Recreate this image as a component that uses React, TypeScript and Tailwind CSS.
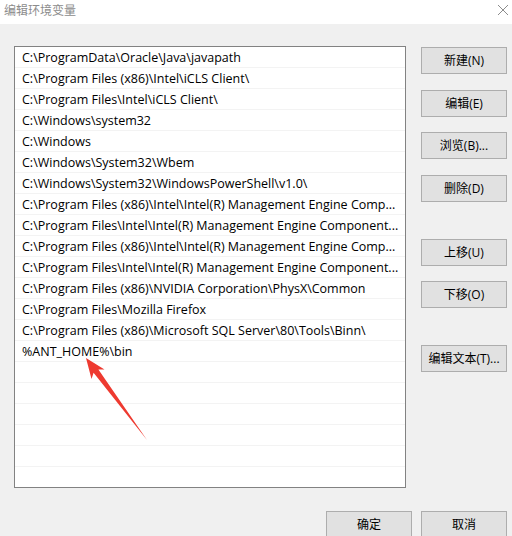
import React from 'react'

const paths = [
  'C:\\ProgramData\\Oracle\\Java\\javapath',
  'C:\\Program Files (x86)\\Intel\\iCLS Client\\',
  'C:\\Program Files\\Intel\\iCLS Client\\',
  'C:\\Windows\\system32',
  'C:\\Windows',
  'C:\\Windows\\System32\\Wbem',
  'C:\\Windows\\System32\\WindowsPowerShell\\v1.0\\',
  'C:\\Program Files (x86)\\Intel\\Intel(R) Management Engine Comp...',
  'C:\\Program Files\\Intel\\Intel(R) Management Engine Component...',
  'C:\\Program Files (x86)\\Intel\\Intel(R) Management Engine Comp...',
  'C:\\Program Files\\Intel\\Intel(R) Management Engine Component...',
  'C:\\Program Files (x86)\\NVIDIA Corporation\\PhysX\\Common',
  'C:\\Program Files\\Mozilla Firefox',
  'C:\\Program Files (x86)\\Microsoft SQL Server\\80\\Tools\\Binn\\',
  '%ANT_HOME%\\bin',
  '',
  '',
  '',
  '',
  '',
  '',
]

const FONT = "font-['Open_Sans','Noto_Sans_CJK_SC',sans-serif]"

function WinButton({ label, className = '' }: { label: string; className?: string }) {
  return (
    <button
      className={`h-[27px] w-[86px] shrink-0 border border-[#adadad] bg-[#e1e1e1] text-[12px] text-black flex items-center justify-center ${className}`}
    >
      {label}
    </button>
  )
}

export default function App() {
  return (
    <div className={`relative h-[536px] w-[512px] overflow-hidden bg-[#f0f0f0] ${FONT}`}>
      {/* Title bar */}
      <div className="flex h-[24px] items-center justify-between bg-white pl-[4px] pr-[2px]">
        <span className="text-[12px] leading-none text-[#8c8c8c] -mt-[3px]">编辑环境变量</span>
        <svg width="12" height="12" viewBox="0 0 12 12" className="-mt-[4px] mr-[1px]">
          <path d="M1 1 L11 11 M11 1 L1 11" stroke="#8c8c8c" strokeWidth="1" fill="none" />
        </svg>
      </div>

      {/* Body */}
      <div className="flex flex-col pl-[14px] pr-[5px] pt-[22px]">
        <div className="flex">
          <div className="h-[442px] w-[392px] overflow-hidden border border-[#828282] bg-white">
            {paths.map((p, i) => (
              <div
                key={i}
                className="flex h-[21px] items-center overflow-hidden whitespace-nowrap border-b border-[#f3f3f3] pl-[7px] pt-[2px] text-[12.5px] text-black"
              >
                {p}
              </div>
            ))}
          </div>

          <div className="ml-[15px] flex flex-col pt-[1px]">
            <WinButton label="新建(N)" />
            <WinButton label="编辑(E)" className="mt-[16px]" />
            <WinButton label="浏览(B)..." className="mt-[15px]" />
            <WinButton label="删除(D)" className="mt-[16px]" />
            <WinButton label="上移(U)" className="mt-[37px]" />
            <WinButton label="下移(O)" className="mt-[15px]" />
            <WinButton label="编辑文本(T)..." className="mt-[37px]" />
          </div>
        </div>

        <div className="mt-[23px] flex justify-end gap-[9px]">
          <WinButton label="确定" />
          <WinButton label="取消" />
        </div>
      </div>

      {/* Red annotation arrow */}
      <svg
        className="pointer-events-none absolute left-0 top-0"
        width="512"
        height="536"
        viewBox="0 0 512 536"
      >
        <polygon
          points="86,358 104.5,369.5 98.4,369.6 147,440 93.6,372.8 91.5,379"
          fill="#ee3a30"
        />
      </svg>
    </div>
  )
}
